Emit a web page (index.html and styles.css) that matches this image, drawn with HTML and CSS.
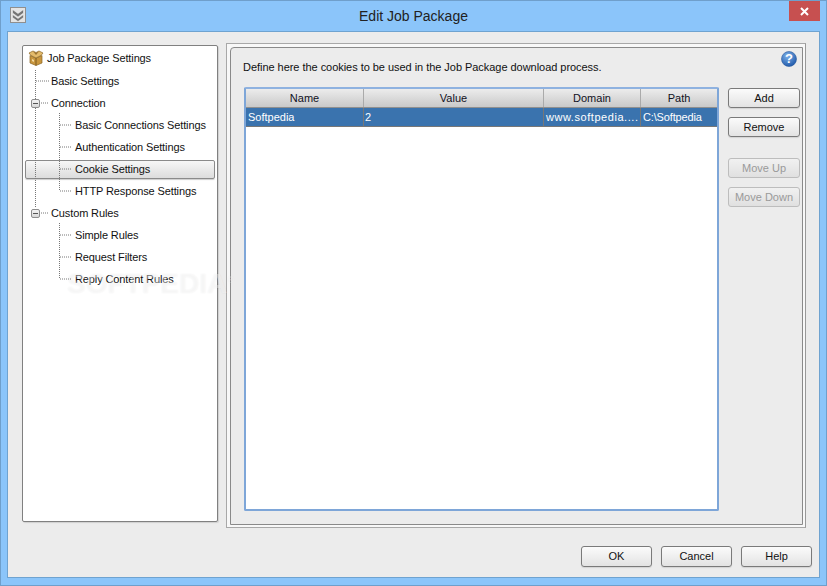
FILE: index.html
```html
<!DOCTYPE html>
<html lang="en">
<head>
<meta charset="utf-8">
<title>Edit Job Package</title>
<link rel="stylesheet" href="styles.css">
</head>
<body>
<div class="window">
  <header class="titlebar">
    <div class="sysicon">
      <svg width="16" height="16" viewBox="0 0 16 16"><rect x="0.5" y="0.5" width="15" height="15" fill="#e4e4e4" stroke="#8f8f8f"/><path d="M2.5 2.5l5.5 4 5.5-4v3.5l-5.5 4-5.5-4z" fill="#757575" stroke="#fafafa" stroke-width="0.5"/><path d="M2.5 7.5l5.5 4 5.5-4v3l-5.5 4-5.5-4z" fill="#757575" stroke="#fafafa" stroke-width="0.5"/></svg>
    </div>
    <div class="title">Edit Job Package</div>
    <div class="close">
      <svg width="9" height="9" viewBox="0 0 9 9"><path d="M1 1l7 7M8 1l-7 7" stroke="#fff" stroke-width="2"/></svg>
    </div>
  </header>
  <div class="client">
    <div class="main">
      <nav class="tree">
        <svg class="tree-lines" width="194" height="300" viewBox="0 0 194 300">
          <g stroke="#777" stroke-dasharray="1 1" fill="none">
            <path d="M12.5 24V162M13 35H26M18 57H26"/>
            <path d="M36.5 67V145M37 79H49M37 101H49M37 123H49M37 145H49"/>
            <path d="M18 167H26M36.5 177V233M37 189H49M37 211H49M37 233H49"/>
          </g>
        </svg>
        <div class="row root"><svg class="box-icon" width="16" height="16" viewBox="0 0 16 16"><path d="M2 5.5L8 8l6-2.5V13l-6 2.5L2 13z" fill="#c8963e" stroke="#8a6626" stroke-width="0.7"/><path d="M8 8v7.5" stroke="#7d5a1e"/><path d="M1 3l4-2 3 1.5L11 1l4 2-2 2.5L8 8 3 5.5z" fill="#e4bb6b" stroke="#8a6626" stroke-width="0.7"/><path d="M5 1.5L8 2.8 11 1.5 8 5z" fill="#9a7230"/><path d="M4 9l2 1v2l-2-1z" fill="#f1d9a3"/></svg><span>Job Package Settings</span></div>
        <div class="row lvl1">Basic Settings</div>
        <div class="row lvl1"><span class="toggle"></span>Connection</div>
        <div class="row lvl2">Basic Connections Settings</div>
        <div class="row lvl2">Authentication Settings</div>
        <div class="row lvl2 selected">Cookie Settings</div>
        <div class="row lvl2">HTTP Response Settings</div>
        <div class="row lvl1"><span class="toggle"></span>Custom Rules</div>
        <div class="row lvl2">Simple Rules</div>
        <div class="row lvl2">Request Filters</div>
        <div class="row lvl2">Reply Content Rules</div>
      </nav>
      <section class="panel">
        <div class="panel-inner">
          <div class="panel-head">
            <p class="intro">Define here the cookies to be used in the Job Package download process.</p>
            <svg class="help" width="16" height="16" viewBox="0 0 16 16"><defs><radialGradient id="h" cx="40%" cy="30%" r="75%"><stop offset="0" stop-color="#7fb2ea"/><stop offset="1" stop-color="#1c56a8"/></radialGradient></defs><circle cx="8" cy="8" r="7.5" fill="url(#h)" stroke="#2a5a9e" stroke-width="0.6"/><text x="8" y="12" text-anchor="middle" class="help-q">?</text></svg>
          </div>
          <div class="content">
            <div class="table">
              <div class="thead">
                <div class="th c1">Name</div><div class="th c2">Value</div><div class="th c3">Domain</div><div class="th c4">Path</div>
              </div>
              <div class="tr">
                <div class="td c1">Softpedia</div><div class="td c2">2</div><div class="td c3">www.softpedia....</div><div class="td c4">C:\Softpedia</div>
              </div>
            </div>
            <div class="side">
              <button class="btn">Add</button>
              <button class="btn">Remove</button>
              <button class="btn off gap">Move Up</button>
              <button class="btn off">Move Down</button>
            </div>
          </div>
        </div>
      </section>
    </div>
    <footer class="footer">
      <button class="btn big">OK</button>
      <button class="btn big">Cancel</button>
      <button class="btn big">Help</button>
    </footer>
    <div class="watermark">SOFTPEDIA<sup>®</sup></div>
  </div>
</div>
</body>
</html>
```
FILE: styles.css
```css
* { box-sizing: border-box; }
html, body { margin: 0; padding: 0; }
body { width: 827px; height: 586px; overflow: hidden; font-family: "Liberation Sans", Arial, sans-serif; font-size: 11px; color: #000; }
.window { width: 827px; height: 586px; background: #8bc5fa; border: 1px solid #6f9fcb; padding: 0 6px 7px 6px; display: flex; flex-direction: column; }
.titlebar { height: 30px; flex: none; display: flex; align-items: flex-start; position: relative; }
.sysicon { margin: 6px 0 0 3px; width: 16px; height: 16px; }
.title { position: absolute; left: 0; right: 0; top: 7px; text-align: center; font-size: 14px; color: #222; }
.close { margin: 0 0 0 auto; width: 31px; height: 20px; background: #c75050; display: flex; align-items: center; justify-content: center; }
.client { flex: 1; background: #ececec; border: 1px solid #6fa3d0; position: relative; display: flex; flex-direction: column; padding: 13px 13px 10px 14px; }
.main { display: flex; align-items: flex-start; gap: 8px; }
.tree { position: relative; flex: none; width: 196px; height: 477px; background: #fff; border: 1px solid #808080; border-radius: 2px; box-shadow: 1px 1px 1px #d0d0d0; padding: 1px 2px; letter-spacing: -0.12px; }
.tree-lines { position: absolute; left: 0; top: 0; z-index: 1; }
.row { position: relative; height: 22px; line-height: 22px; white-space: nowrap; color: #111; }
.root { display: flex; align-items: center; gap: 3px; padding-left: 3px; padding-bottom: 2px; height: 23px; }
.box-icon { flex: none; }
.lvl1 { padding-left: 26px; }
.lvl2 { padding-left: 50px; }
.selected { background: linear-gradient(#f7f7f7, #dcdcdc); border: 1px solid #8a8a8a; border-radius: 2px; height: 19px; line-height: 16px; margin: 2px 0 1px; padding-left: 49px; box-shadow: 0 1px 1px #ccc; }
.toggle { position: absolute; left: 6px; top: 7px; width: 9px; height: 9px; background: linear-gradient(#f4f4f4, #d8d8d8); border: 1px solid #8d8d8d; border-radius: 2px; z-index: 2; }
.toggle::after { content: ""; position: absolute; left: 1px; right: 1px; top: 3px; height: 1px; background: #555; }
.panel { flex: none; width: 580px; height: 485px; margin-top: -2px; border: 1px solid #a8a8a8; border-right-color: #999; background: #f8f8f8; padding: 3px 2px 2px 3px; }
.panel-inner { height: 100%; background: #ececec; border: 1px solid #8a8a8a; border-radius: 4px 0 0 0; padding: 0 3px 12px 13px; display: flex; flex-direction: column; }
.panel-head { height: 39px; flex: none; position: relative; display: flex; }
.intro { margin: 9px 0 0 -1px; line-height: 20px; color: #111; letter-spacing: -0.04px; }
.help { position: absolute; right: 2px; top: 3px; }
.help-q { font-size: 13px; font-weight: bold; fill: #fff; font-family: "Liberation Sans", Arial, sans-serif; }
.content { flex: 1; display: flex; gap: 9px; min-height: 0; }
.table { width: 475px; height: 424px; flex: none; background: #fff; border: 2px solid #7ea6d8; border-top-color: #8fb2e0; border-radius: 2px; overflow: hidden; }
.thead { display: flex; height: 19px; background: linear-gradient(#ececec, #c9c9c9); border-bottom: 1px solid #8f8f8f; }
.th { line-height: 18px; text-align: center; color: #112; border-right: 1px solid #aaa; }
.th:last-child, .td:last-child { border-right: 0; }
.tr { display: flex; height: 19px; background: #3a73ae; border-bottom: 1px solid #777; color: #fff; }
.td { line-height: 18px; padding-left: 2px; border-right: 1px solid #777; white-space: nowrap; overflow: hidden; }
.td.c2 { padding-left: 1px; }
.td.c4 { letter-spacing: -0.15px; }
.c1 { width: 118px; }
.c2 { width: 180px; }
.c3 { width: 97px; letter-spacing: 0.55px; }
.th.c3 { letter-spacing: 0; }
.c4 { flex: 1; }
.side { display: flex; flex-direction: column; gap: 9px; padding-top: 1px; }
.btn { width: 72px; height: 20px; padding: 0; font: inherit; color: #111; background: linear-gradient(#fbfbfb, #e3e3e3); border: 1px solid #7a7a7a; border-radius: 3px; box-shadow: 0 1px 1px #d4d4d4; }
.btn.off { color: #9a9a9a; background: linear-gradient(#f1f1f1, #e0e0e0); border-color: #bdbdbd; box-shadow: none; }
.gap { margin-top: 12px; }
.footer { display: flex; justify-content: flex-end; gap: 9px; margin-top: 18px; margin-right: -6px; }
.big { width: 71px; height: 21px; padding-bottom: 1px; }
.watermark { position: absolute; left: 59px; top: 232px; font-size: 28px; line-height: 32px; font-weight: bold; color: rgba(255,255,255,0.4); text-shadow: 0 0 2px rgba(0,0,0,0.06); pointer-events: none; }
.watermark sup { font-size: 9px; font-weight: normal; }
```
